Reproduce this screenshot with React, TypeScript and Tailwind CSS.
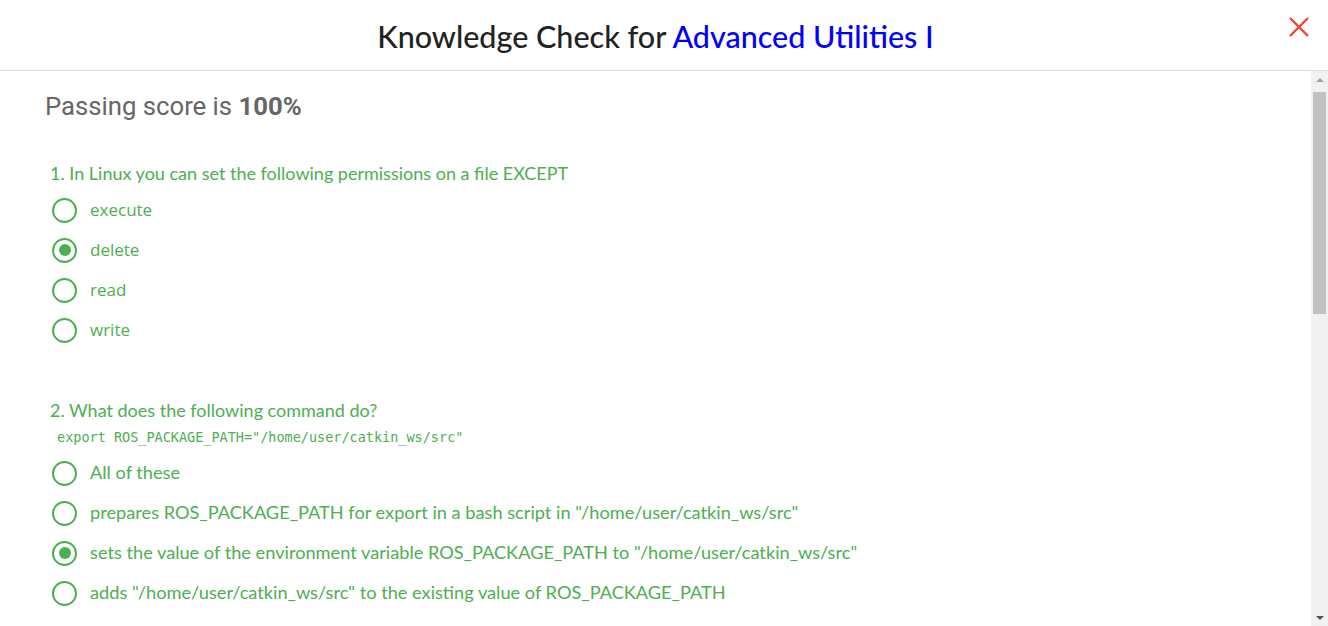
import React from 'react'

const q1 = ['execute', 'delete', 'read', 'write']
const q2 = [
  'All of these',
  'prepares ROS_PACKAGE_PATH for export in a bash script in "/home/user/catkin_ws/src"',
  'sets the value of the environment variable ROS_PACKAGE_PATH to "/home/user/catkin_ws/src"',
  'adds "/home/user/catkin_ws/src" to the existing value of ROS_PACKAGE_PATH',
]

function Radio({ checked }: { checked: boolean }) {
  return (
    <span className="flex h-[25px] w-[25px] shrink-0 items-center justify-center rounded-full border-[2.5px] border-[#4caf50]">
      {checked && <span className="h-[12px] w-[12px] rounded-full bg-[#4caf50]" />}
    </span>
  )
}

function Option({ label, checked, font }: { label: string; checked: boolean; font: string }) {
  return (
    <label className="flex h-[40px] items-center gap-[13px] pl-[52px]">
      <Radio checked={checked} />
      <span className={`text-[#4caf50] ${font}`}>{label}</span>
    </label>
  )
}

export default function App() {
  return (
    <div className="flex h-[626px] w-[1328px] flex-col overflow-hidden bg-white">
      <header className="relative flex h-[71px] shrink-0 items-center justify-center border-b border-[#dddddd] pr-[17px]">
        <h1 className="pt-[3px] font-['Lato',sans-serif] text-[30.5px] font-medium text-[#222222]">
          Knowledge Check for <span className="text-[#0000ff]">Advanced Utilities I</span>
        </h1>
        <button className="absolute right-[17px] top-[15px] text-[#f44336]">
          <svg width="24" height="24" viewBox="0 0 24 24" fill="none" stroke="currentColor" strokeWidth="2.4">
            <path d="M3 3 L21 21 M21 3 L3 21" />
          </svg>
        </button>
      </header>

      <div className="flex min-h-0 flex-1">
        <main className="flex-1 overflow-hidden">
          <p className="pl-[45px] pt-[20px] font-['Roboto',sans-serif] text-[25.7px] leading-[30px] text-[#666666]">
            Passing score is <b className="font-bold">100%</b>
          </p>

          <section className="pt-[40px]">
            <p className="pl-[50px] font-['Lato',sans-serif] text-[18px] leading-[24px] text-[#4caf50]">
              1. In Linux you can set the following permissions on a file EXCEPT
            </p>
            <div className="pt-[5px]">
              {q1.map((o, i) => (
                <Option key={o} label={o} checked={i === 1} font="font-['Open_Sans',sans-serif] text-[17px]" />
              ))}
            </div>
          </section>

          <section className="pt-[48px]">
            <p className="pl-[50px] font-['Lato',sans-serif] text-[18px] leading-[24px] text-[#4caf50]">
              2. What does the following command do?
            </p>
            <pre className="pl-[57px] pt-[6px] font-['DejaVu_Sans_Mono',monospace] text-[13.5px] leading-[18px] text-[#4caf50]">
              export ROS_PACKAGE_PATH="/home/user/catkin_ws/src"
            </pre>
            <div className="pt-[7px]">
              {q2.map((o, i) => (
                <Option key={o} label={o} checked={i === 2} font="font-['Lato',sans-serif] text-[18.2px]" />
              ))}
            </div>
          </section>
        </main>

        <div className="flex w-[17px] shrink-0 flex-col bg-[#f1f1f1]">
          <div className="flex h-[17px] items-center justify-center">
            <span className="h-0 w-0 border-x-[4px] border-b-[4px] border-x-transparent border-b-[#a3a3a3]" />
          </div>
          <div className="mx-[2px] mt-[4px] h-[222px] bg-[#c1c1c1]" />
          <div className="flex-1" />
          <div className="flex h-[17px] items-center justify-center">
            <span className="h-0 w-0 border-x-[4px] border-t-[4px] border-x-transparent border-t-[#505050]" />
          </div>
        </div>
      </div>
    </div>
  )
}
